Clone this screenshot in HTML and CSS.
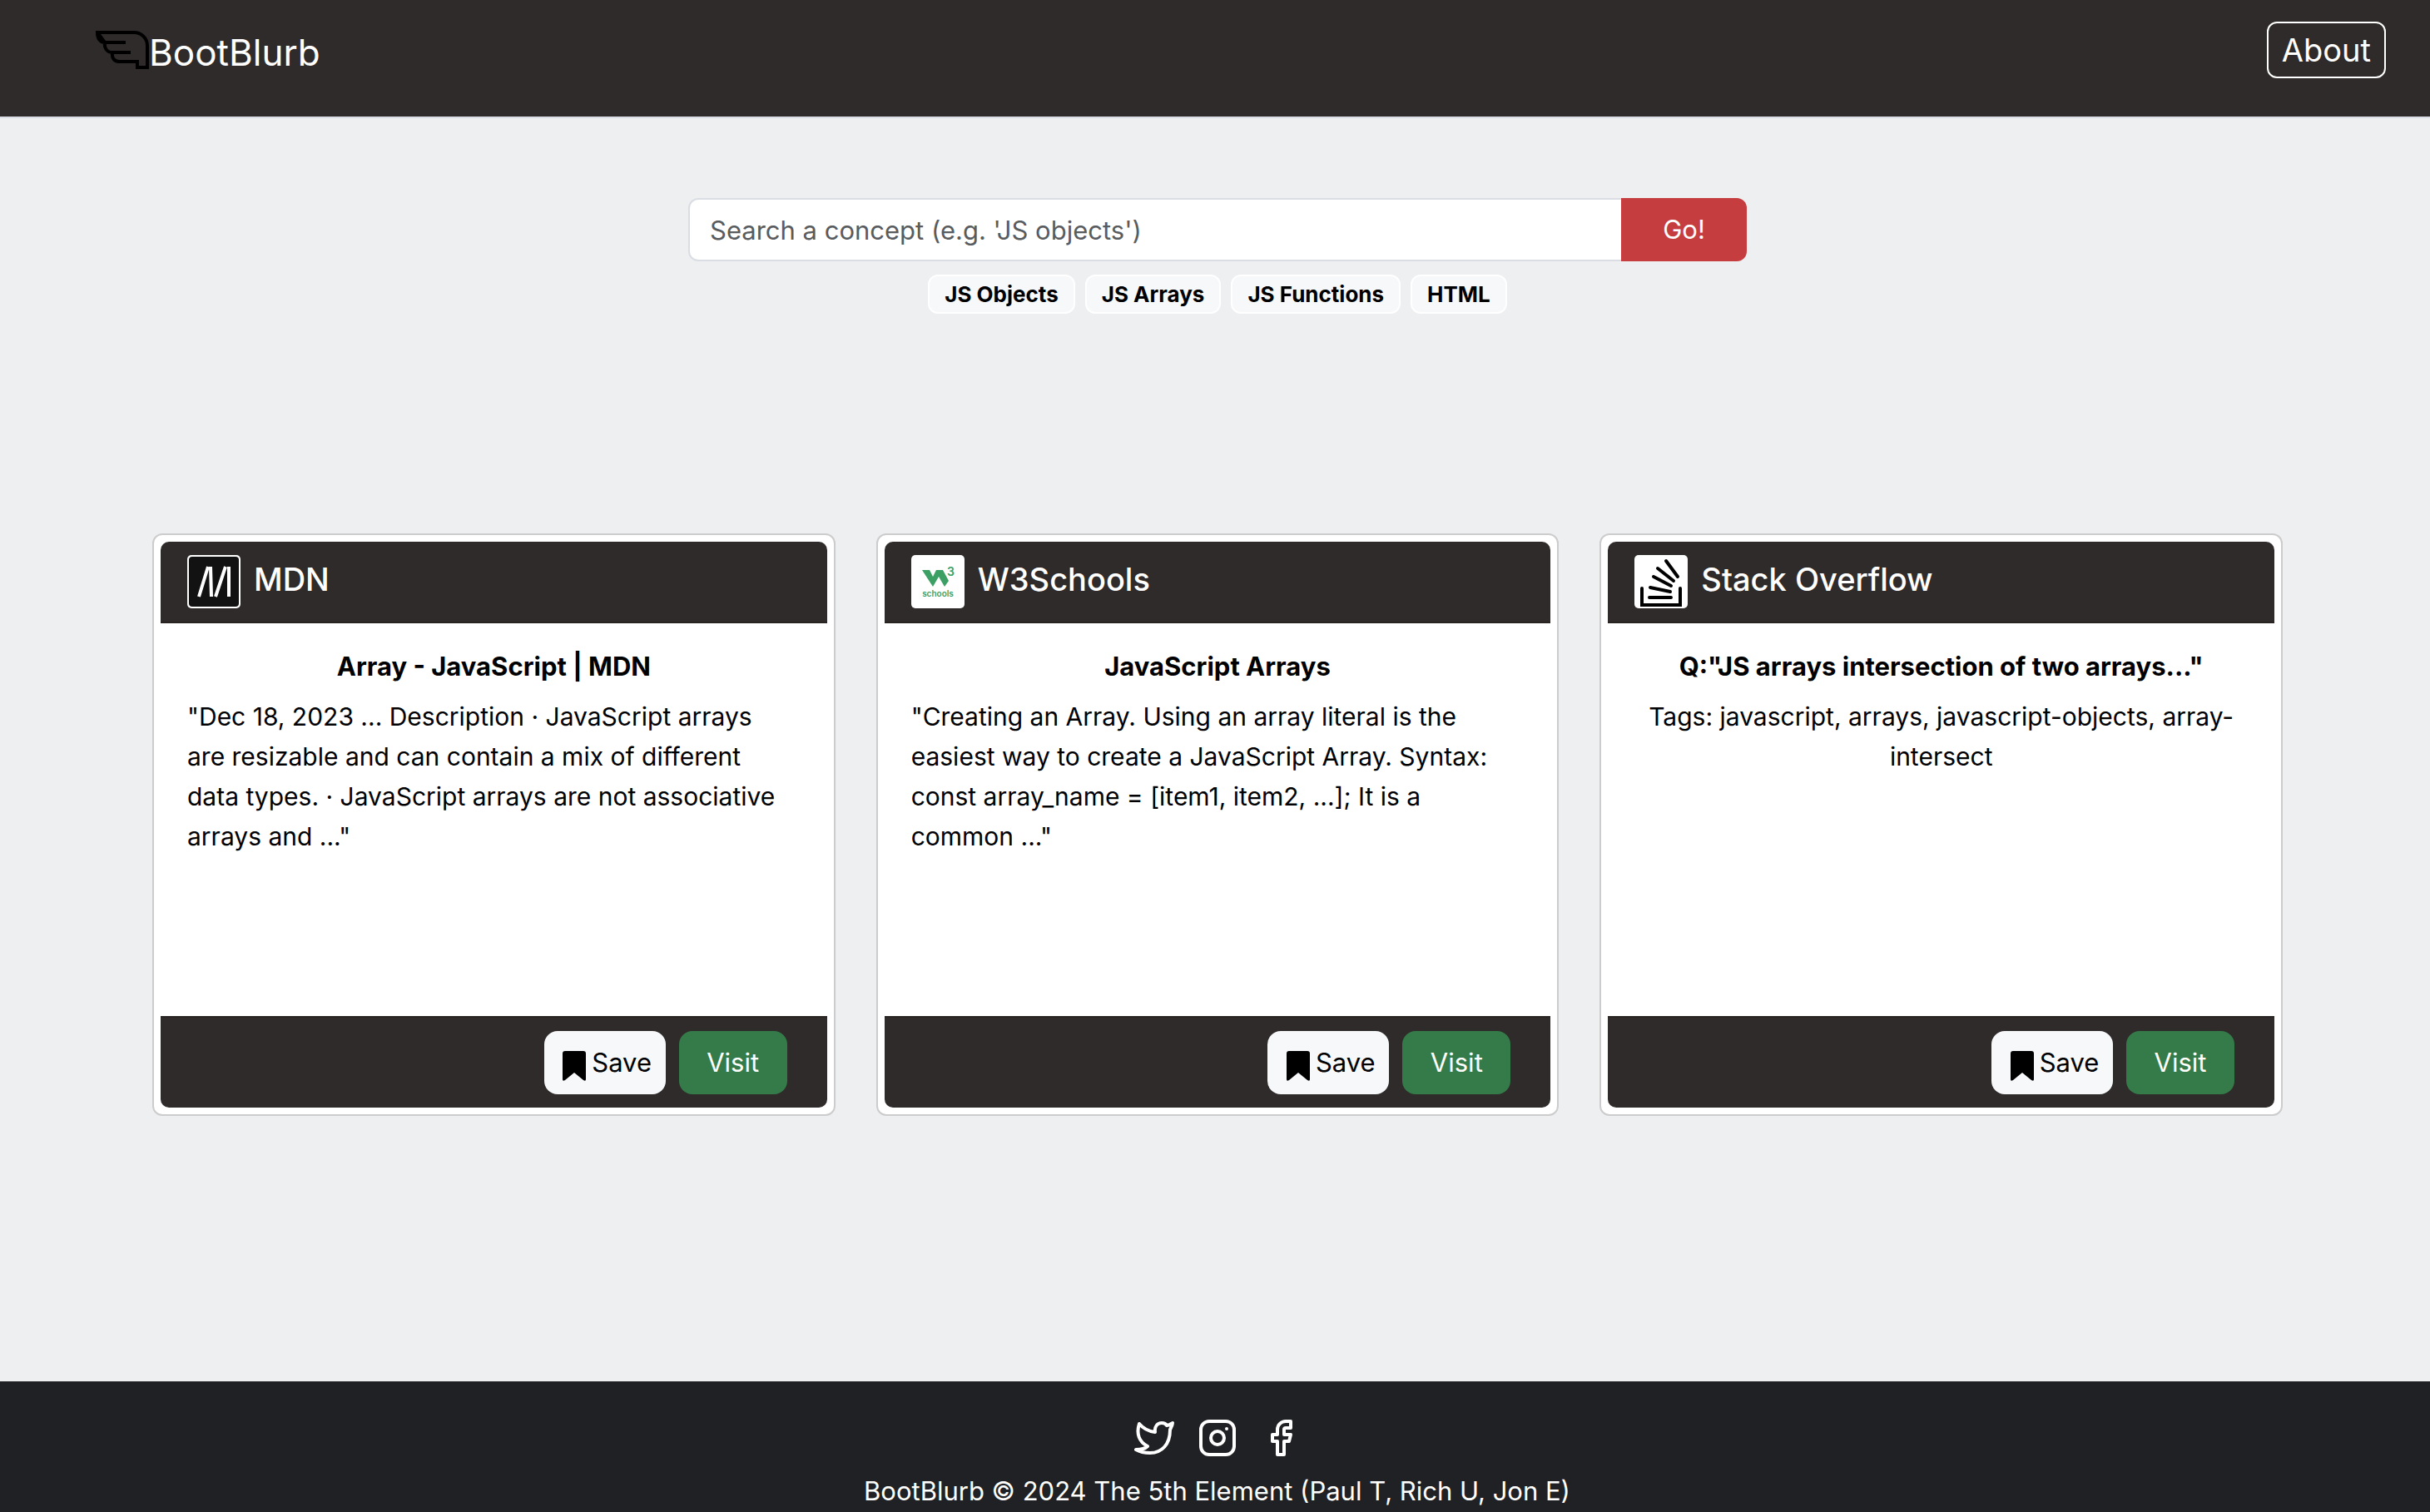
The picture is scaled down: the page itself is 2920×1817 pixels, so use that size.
FILE: index.html
```html
<!DOCTYPE html>
<html lang="en">
<head>
<meta charset="utf-8">
<meta name="viewport" content="width=device-width, initial-scale=1">
<title>BootBlurb</title>
<link rel="stylesheet" href="styles.css">
</head>
<body>
<header class="navbar">
  <a class="brand" href="#">
    <svg class="brand-icon" viewBox="0 0 64 46" aria-hidden="true"><path d="M2 2H46C55 2 62 9 62 18V44H50V37H28C22 37 19 32 20 26H42M20 26C13 26 10 20 11 14H36M11 14C5 14 2 9 2 2Z"/></svg>
    <span>BootBlurb</span>
  </a>
  <button class="about" type="button">About</button>
</header>

<main class="main">
  <form class="search">
    <div class="search-row">
      <input class="search-input" type="text" aria-label="Search a concept" placeholder="Search a concept (e.g. 'JS objects')">
      <button class="go" type="submit">Go!</button>
    </div>
    <div class="topics">
      <button class="topic" type="button">JS Objects</button>
      <button class="topic" type="button">JS Arrays</button>
      <button class="topic" type="button">JS Functions</button>
      <button class="topic" type="button">HTML</button>
    </div>
  </form>

  <section class="cards">
    <article class="card">
      <header class="card-header">
        <svg class="logo" viewBox="0 0 64 64" aria-hidden="true"><rect width="64" height="64" rx="5" fill="#fff"/><rect x="2" y="2" width="60" height="60" rx="4" fill="#121212"/><path d="M14 50L25 14M28 14L29 50M34 50L46 14M50 14V50" fill="none" stroke="#fff" stroke-width="4"/></svg>
        <h2 class="card-source">MDN</h2>
      </header>
      <div class="card-body">
        <h3 class="card-title">Array - JavaScript | MDN</h3>
        <p class="card-text">"Dec 18, 2023 ... Description · JavaScript arrays are resizable and can contain a mix of different data types. · JavaScript arrays are not associative arrays and ..."</p>
      </div>
      <footer class="card-footer">
        <button class="btn btn-save" type="button"><svg class="bookmark" viewBox="0 0 28 36" aria-hidden="true"><path d="M3 0H25Q28 0 28 3V34Q28 37 25 35L14 26L3 35Q0 37 0 34V3Q0 0 3 0Z"/></svg>Save</button>
        <button class="btn btn-visit" type="button">Visit</button>
      </footer>
    </article>

    <article class="card">
      <header class="card-header">
        <svg class="logo" viewBox="0 0 64 64" aria-hidden="true"><rect width="64" height="64" rx="5" fill="#fff"/><path d="M13 18H22L26 26L30 18H38L45 31L40 38L33 26L26 38Z" fill="#3c9f63"/><text x="43" y="25" class="logo-three">3</text><text x="32" y="50" class="logo-word">schools</text></svg>
        <h2 class="card-source">W3Schools</h2>
      </header>
      <div class="card-body">
        <h3 class="card-title">JavaScript Arrays</h3>
        <p class="card-text">"Creating an Array. Using an array literal is the easiest way to create a JavaScript Array. Syntax: const array_name = [item1, item2, ...]; It is a common ..."</p>
      </div>
      <footer class="card-footer">
        <button class="btn btn-save" type="button"><svg class="bookmark" viewBox="0 0 28 36" aria-hidden="true"><path d="M3 0H25Q28 0 28 3V34Q28 37 25 35L14 26L3 35Q0 37 0 34V3Q0 0 3 0Z"/></svg>Save</button>
        <button class="btn btn-visit" type="button">Visit</button>
      </footer>
    </article>

    <article class="card">
      <header class="card-header">
        <svg class="logo" viewBox="0 0 64 64" aria-hidden="true"><rect width="64" height="64" rx="5" fill="#fff"/><path d="M9 40V60H55V40M18 51H44M19 39L43 44M23 26L44 37M28 16L47 31M38 7L52 26" fill="none" stroke="#000" stroke-width="4" stroke-linecap="round"/></svg>
        <h2 class="card-source">Stack Overflow</h2>
      </header>
      <div class="card-body">
        <h3 class="card-title">Q:"JS arrays intersection of two arrays..."</h3>
        <p class="card-text card-tags">Tags: javascript, arrays, javascript-objects, array-intersect</p>
      </div>
      <footer class="card-footer">
        <button class="btn btn-save" type="button"><svg class="bookmark" viewBox="0 0 28 36" aria-hidden="true"><path d="M3 0H25Q28 0 28 3V34Q28 37 25 35L14 26L3 35Q0 37 0 34V3Q0 0 3 0Z"/></svg>Save</button>
        <button class="btn btn-visit" type="button">Visit</button>
      </footer>
    </article>
  </section>
</main>

<footer class="footer">
  <nav class="social">
    <a href="#" aria-label="Twitter"><svg class="social-icon bird" viewBox="0 0 48 48"><path d="M6 7C11 13 17 16 25 17C24 10 28 6 33 6C36 6 38 7 39 9C42 9 44 7 46 6C46 9 44 12 43 14C43 32 33 42 19 42C13 42 7 41 2 38C8 38 13 37 16 34C6 29 2 19 6 7Z"/></svg></a>
    <a href="#" aria-label="Instagram"><svg class="social-icon" viewBox="0 0 24 24"><rect x="2" y="2" width="20" height="20" rx="5"/><circle cx="12" cy="12" r="4"/><path d="M17.500 6.500h.01"/></svg></a>
    <a href="#" aria-label="Facebook"><svg class="social-icon" viewBox="0 0 24 24"><path d="M18 2h-3a5 5 0 0 0-5 5v3H7v4h3v8h4v-8h3l1-4h-4V7a1 1 0 0 1 1-1h3z"/></svg></a>
  </nav>
  <p class="copyright">BootBlurb © 2024 The 5th Element (Paul T, Rich U, Jon E)</p>
</footer>
</body>
</html>
```
FILE: styles.css
```css
* { box-sizing: border-box; }

body {
  margin: 0;
  min-height: 100vh;
  display: flex;
  flex-direction: column;
  background: #edeff1;
  color: #000;
  font-family: Inter, "Liberation Sans", sans-serif;
  font-size: 31px;
  line-height: 48px;
}

button, input { font: inherit; }
button { cursor: pointer; }
h2, h3, p { margin: 0; }

.navbar {
  display: flex;
  justify-content: space-between;
  align-items: flex-start;
  min-height: 142px;
  padding: 26px 53px 0 115px;
  background: #2f2b2a;
  border-bottom: 2px solid #dadde3;
}
.brand {
  display: flex;
  color: #fff;
  text-decoration: none;
  font-size: 44px;
  line-height: 74px;
}
.brand-icon {
  width: 64px;
  height: 46px;
  margin-top: 11px;
  fill: none;
  stroke: #000;
  stroke-width: 4;
}
.about {
  height: 68px;
  padding: 0 16px;
  border: 2px solid #fff;
  border-radius: 12px;
  background: transparent;
  color: #fff;
  font-size: 38px;
}

.main {
  flex: 1;
  padding: 96px 177px 0 183px;
}
.search {
  width: 1272px;
  max-width: 100%;
  margin: 0 auto;
}
.search-row { display: flex; }
.search-input {
  flex: 1;
  min-width: 0;
  height: 76px;
  padding: 0 24px;
  border: 2px solid #dadde3;
  border-right: 0;
  border-radius: 12px 0 0 12px;
  background: #fff;
}
.search-input::placeholder { color: #595c5f; opacity: 1; }
.go {
  width: 151px;
  border: 0;
  border-radius: 0 12px 12px 0;
  background: #c53d3f;
  color: #fff;
}
.topics {
  display: flex;
  justify-content: center;
  gap: 12px;
  margin-top: 16px;
}
.topic {
  height: 47px;
  padding: 0 18px;
  border: 2px solid #fff;
  border-radius: 12px;
  background: #f7f8fa;
  color: #000;
  font-size: 26px;
  font-weight: 700;
  line-height: 40px;
}

.cards {
  display: grid;
  grid-template-columns: repeat(3, minmax(0, 1fr));
  gap: 49px;
  margin-top: 264px;
}
.card {
  display: flex;
  flex-direction: column;
  min-height: 700px;
  padding: 8px;
  border: 2px solid #ccc;
  border-radius: 12px;
  background: #fff;
}
.card-header {
  display: flex;
  gap: 16px;
  height: 98px;
  padding: 16px 32px;
  border-bottom: 2px solid #292322;
  border-radius: 10px 10px 0 0;
  background: #2f2b2a;
  color: #fff;
}
.logo { width: 64px; height: 64px; }
.logo-three { fill: #3c9f63; font-size: 14px; font-weight: 600; }
.logo-word { fill: #3c9f63; font-size: 10px; font-weight: 600; text-anchor: middle; }
.card-source {
  font-size: 38px;
  font-weight: 500;
  line-height: 58px;
}
.card-body {
  flex: 1;
  padding: 28px 32px;
}
.card-title {
  margin-bottom: 12px;
  font-size: 31px;
  font-weight: 700;
  line-height: 48px;
  text-align: center;
}
.card-text {
  padding-right: 16px;
  font-size: 30px;
}
.card-tags {
  padding-right: 0;
  text-align: center;
}
.card-footer {
  display: flex;
  justify-content: flex-end;
  gap: 16px;
  height: 110px;
  padding: 16px 48px;
  border-top: 2px solid #292322;
  border-radius: 0 0 10px 10px;
  background: #2f2b2a;
}
.btn {
  display: flex;
  align-items: center;
  justify-content: center;
  height: 76px;
  border: 0;
  border-radius: 16px;
}
.btn-save {
  gap: 7px;
  width: 146px;
  padding: 0 0 0 6px;
  background: #f7f8fa;
  color: #000;
}
.bookmark {
  width: 28px;
  height: 36px;
  margin-top: 8px;
}
.btn-visit {
  width: 130px;
  background: #347b49;
  color: #fff;
}

.footer {
  padding: 44px 0 0 5px;
  background: #202124;
  color: #fff;
  text-align: center;
}
.social {
  display: flex;
  justify-content: center;
  gap: 28px;
}
.social a { display: flex; color: #fff; }
.social-icon {
  width: 48px;
  height: 48px;
  fill: none;
  stroke: currentColor;
  stroke-width: 2;
  stroke-linecap: round;
  stroke-linejoin: round;
}
.bird { stroke-width: 4; }
.copyright {
  height: 65px;
  padding-top: 16px;
}
```
